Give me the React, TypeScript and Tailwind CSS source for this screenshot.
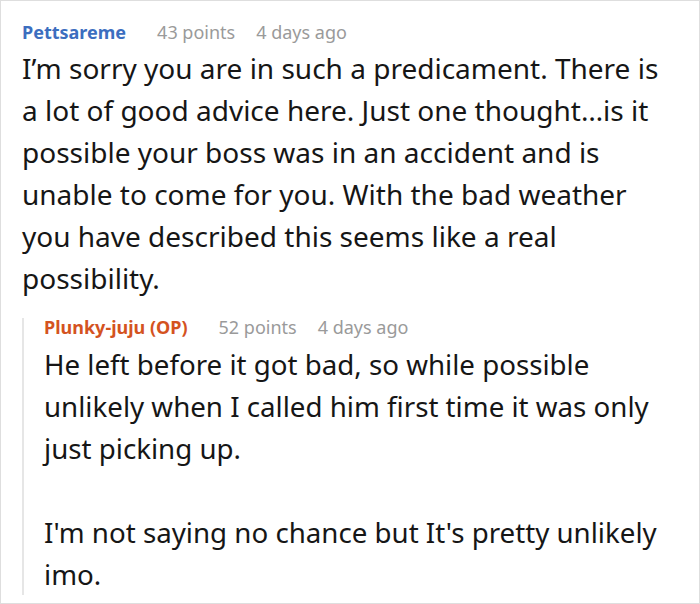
export default function App() {
  return (
    <div
      className="w-[700px] h-[604px] bg-white border border-[#dedede] overflow-hidden"
      style={{ fontFamily: '"Noto Sans", "Open Sans", sans-serif' }}
    >
      <div className="pl-[21px] pr-[29px] pt-[18px]">
        <div className="flex items-baseline text-[18px] leading-[26px]">
          <span className="font-bold text-[#3c6ebf]">Pettsareme</span>
          <span className="ml-[31px] text-[#9a9a9a]">43 points</span>
          <span className="ml-[21px] text-[#9a9a9a]">4 days ago</span>
        </div>
        <p className="mt-[2px] text-[28px] leading-[42px] text-[#161616]">
          I’m sorry you are in such a predicament. There is a lot of good advice here. Just one thought…is it possible your boss was in an accident and is unable to come for you. With the bad weather you have described this seems like a real possibility.
        </p>
        <div className="mt-[19px] border-l-2 border-[#e6e6e6] pl-[20px]">
          <div className="flex items-baseline text-[18px] leading-[18px]">
            <span className="font-bold text-[#d4531f]">Plunky-juju (OP)</span>
            <span className="ml-[31px] text-[#9a9a9a]">52 points</span>
            <span className="ml-[21px] text-[#9a9a9a]">4 days ago</span>
          </div>
          <div className="mt-[7px] text-[27.7px] leading-[42px] text-[#161616]">
            <p>He left before it got bad, so while possible unlikely when I called him first time it was only just picking up.</p>
            <p className="mt-[42px] -mb-[10px]">I'm not saying no chance but It's pretty unlikely imo.</p>
          </div>
        </div>
      </div>
    </div>
  );
}
